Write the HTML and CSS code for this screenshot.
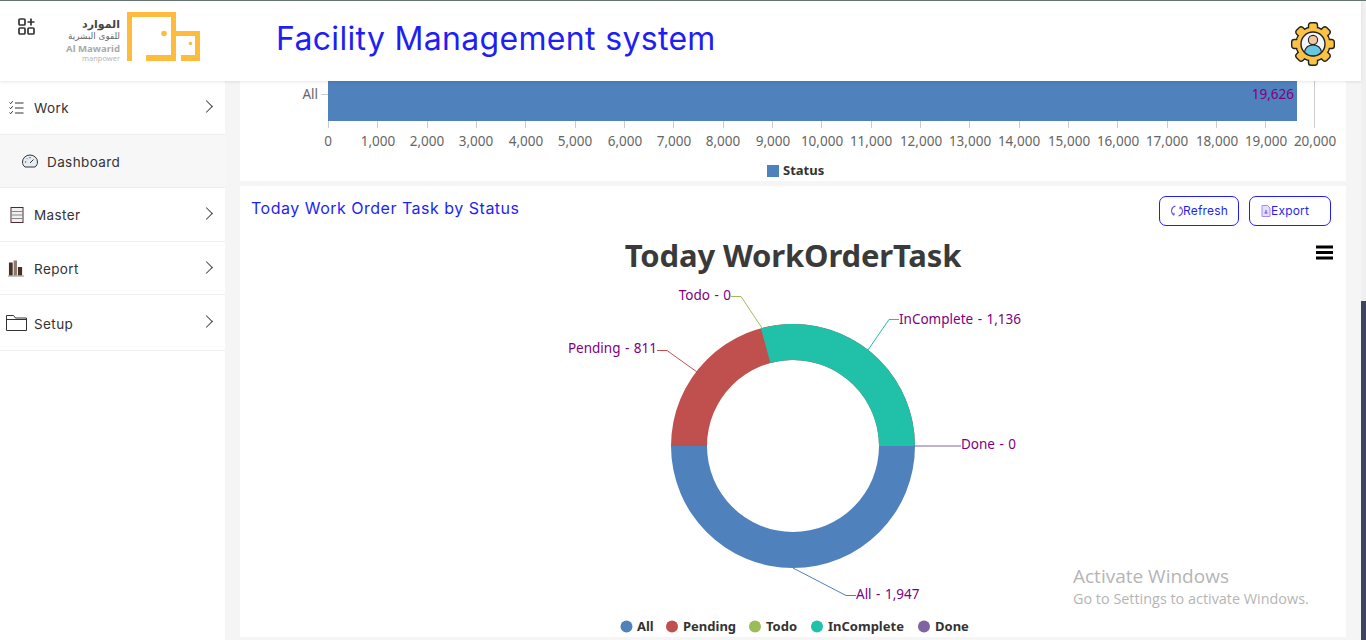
FILE: index.html
```html
<!DOCTYPE html>
<html lang="en">
<head>
    <meta charset="UTF-8">
    <title>Facility Management system</title>
    <link rel="stylesheet" href="styles.css">
</head>
<body>
    <div class="page">
        <header class="topbar">
            <div class="brand">
                <svg class="apps-icon" width="20" height="20" viewBox="0 0 20 20" fill="none" stroke="#333" stroke-width="1.7">
                    <rect x="2" y="2" width="6" height="6" rx="1"/>
                    <rect x="2" y="11" width="6" height="6" rx="1"/>
                    <rect x="11" y="11" width="6" height="6" rx="1"/>
                    <path d="M14 1.500v7M10.500 5h7"/>
                </svg>
                <div class="logo">
                    <div class="logo-text">
                        <span class="logo-ar-big">الموارد</span>
                        <span class="logo-ar">للقوى البشرية</span>
                        <span class="logo-en">Al Mawarid</span>
                        <span class="logo-sub">manpower</span>
                    </div>
                    <svg width="74" height="50" viewBox="0 0 74 50">
                        <path d="M0 0H49V49H19V43H44V5H5V49H0Z" fill="#fdbc3d"/>
                        <path d="M49 19H73V49H54V43H68V24H49Z" fill="#fdbc3d"/>
                        <circle cx="37" cy="21.500" r="2.800" fill="#fdbc3d"/>
                        <circle cx="63.500" cy="31.500" r="1.800" fill="#fdbc3d"/>
                    </svg>
                </div>
            </div>
            <h1 class="app-title">Facility Management system</h1>
            <svg class="user-gear" width="46" height="46" viewBox="0 0 46 46">
                <circle cx="23" cy="23" r="17" fill="#fcc244" stroke="#222" stroke-width="1.400"/>
                <g fill="#fcc244" stroke="#222" stroke-width="1.400">
                    <rect x="18.500" y="1.700" width="9" height="9" rx="2.500"/>
                    <rect x="18.500" y="1.700" width="9" height="9" rx="2.500" transform="rotate(45 23 23)"/>
                    <rect x="18.500" y="1.700" width="9" height="9" rx="2.500" transform="rotate(90 23 23)"/>
                    <rect x="18.500" y="1.700" width="9" height="9" rx="2.500" transform="rotate(135 23 23)"/>
                    <rect x="18.500" y="1.700" width="9" height="9" rx="2.500" transform="rotate(180 23 23)"/>
                    <rect x="18.500" y="1.700" width="9" height="9" rx="2.500" transform="rotate(225 23 23)"/>
                    <rect x="18.500" y="1.700" width="9" height="9" rx="2.500" transform="rotate(270 23 23)"/>
                    <rect x="18.500" y="1.700" width="9" height="9" rx="2.500" transform="rotate(315 23 23)"/>
                </g>
                <circle cx="23" cy="23" r="16.300" fill="#fcc244"/>
                <circle cx="23" cy="23" r="12" fill="#f1f4f8" stroke="#222" stroke-width="1.400"/>
                <circle cx="23" cy="19" r="4.600" fill="#f3c6a0" stroke="#222" stroke-width="1.100"/>
                <path d="M14.500 31c1-5 4.500-7 8.500-7s7.500 2 8.500 7c-2.300 2.500-5 3.800-8.500 3.800s-6.200-1.300-8.500-3.800z" fill="#69c6e0" stroke="#222" stroke-width="1.100"/>
            </svg>
        </header>

        <div class="layout">
            <nav class="sidebar">
                <a class="nav-item nav-work">
                    <svg class="nav-icon" width="16" height="16" viewBox="0 0 16 16" fill="none" stroke="#333" stroke-width="1">
                        <path d="M1.500 2.500l1.200 1.200 2-2.500M1.500 7.500l1.200 1.200 2-2.500M1.500 12.500l1.200 1.200 2-2.500M7 3h8.500M7 8h8.500M7 13h8.500"/>
                    </svg>
                    <span class="nav-label">Work</span>
                    <span class="chevron"></span>
                </a>
                <a class="nav-item nav-sub">
                    <svg class="nav-icon" width="16" height="16" viewBox="0 0 16 16" fill="none" stroke="#333" stroke-width="1">
                        <path d="M3 14C1.300 12.800.500 11 .500 9a7.500 7 0 0 1 15 0c0 2-.8 3.800-2.500 5z" fill="#e6edf5"/>
                        <path d="M8 10l3.500-3.500M3 9h1.200M5 5.500l.7.700M8 4v1.200"/>
                    </svg>
                    <span class="nav-label">Dashboard</span>
                </a>
                <a class="nav-item nav-master">
                    <svg class="nav-icon" width="16" height="16" viewBox="0 0 16 16" fill="none">
                        <rect x="3" y=".5" width="12" height="15" fill="#f0f0f0" stroke="#4a2a3a"/>
                        <path d="M3.500 4.500h11M3.500 8h11M3.500 11.500h11" stroke="#888"/>
                    </svg>
                    <span class="nav-label">Master</span>
                    <span class="chevron"></span>
                </a>
                <a class="nav-item nav-report">
                    <svg class="nav-icon" width="17" height="17" viewBox="0 0 17 17">
                        <path d="M1 2h4v14H1zM10.500 7H15v9h-4.500z" fill="#4a3020"/>
                        <path d="M6 0h3.500v16H6z" fill="#8a7a70"/>
                        <path d="M0 16.500h17" stroke="#888"/>
                    </svg>
                    <span class="nav-label">Report</span>
                    <span class="chevron"></span>
                </a>
                <a class="nav-item nav-setup">
                    <svg class="nav-folder" width="21" height="16" viewBox="0 0 21 16" fill="none" stroke="#333">
                        <path d="M.5 15.500V.5h7l2 2.500h11v12.500zM.5 4.500h20"/>
                    </svg>
                    <span class="nav-label">Setup</span>
                    <span class="chevron"></span>
                </a>
            </nav>

            <main class="content">
                <section class="card card-bar">
                    <svg width="1106" height="100" viewBox="240 81 1106 100">
                        <path d="M328.500 81V127M1314.500 81V127" stroke="#ccc"/>
                        <rect x="328" y="81" width="969" height="40" fill="#4f81bd"/>
                        <path d="M321 94.500h7" stroke="#ccc"/>
                        <text class="axis-label" x="318" y="99" text-anchor="end">All</text>
                        <text class="data-label" x="1294" y="99" text-anchor="end">19,626</text>
                        <path stroke="#ccc" d="M328.500 121v7M377.500 121v7M427.500 121v7M476.500 121v7M525.500 121v7M575.500 121v7M624.500 121v7M673.500 121v7M723.500 121v7M772.500 121v7M821.500 121v7M871.500 121v7M920.500 121v7M969.500 121v7M1019.500 121v7M1068.500 121v7M1117.500 121v7M1167.500 121v7M1216.500 121v7M1265.500 121v7M1314.500 121v7"/>
                        <g class="axis-label" text-anchor="middle">
                            <text x="328" y="146">0</text>
                            <text x="378" y="146">1,000</text>
                            <text x="427" y="146">2,000</text>
                            <text x="476" y="146">3,000</text>
                            <text x="526" y="146">4,000</text>
                            <text x="575" y="146">5,000</text>
                            <text x="625" y="146">6,000</text>
                            <text x="674" y="146">7,000</text>
                            <text x="723" y="146">8,000</text>
                            <text x="773" y="146">9,000</text>
                            <text x="822" y="146">10,000</text>
                            <text x="871" y="146">11,000</text>
                            <text x="921" y="146">12,000</text>
                            <text x="970" y="146">13,000</text>
                            <text x="1019" y="146">14,000</text>
                            <text x="1069" y="146">15,000</text>
                            <text x="1118" y="146">16,000</text>
                            <text x="1167" y="146">17,000</text>
                            <text x="1217" y="146">18,000</text>
                            <text x="1266" y="146">19,000</text>
                            <text x="1315" y="146">20,000</text>
                        </g>
                        <rect x="767" y="165" width="12" height="12" fill="#4f81bd"/>
                        <text class="legend-label" x="783" y="175">Status</text>
                    </svg>
                </section>

                <section class="card card-donut">
                    <div class="card-head">
                        <h2 class="card-title">Today Work Order Task by Status</h2>
                        <div class="card-actions">
                            <button class="btn btn-refresh">
                                <svg width="12" height="12" viewBox="0 0 12 12" fill="none" stroke="#6a50f5" stroke-width="1.100">
                                    <path d="M4.500 1A5 5 0 0 0 3 10.200M3 10.200V7.800M7.500 11A5 5 0 0 0 9 1.800M9 1.800v2.400"/>
                                </svg>Refresh
                            </button>
                            <button class="btn btn-export">
                                <svg width="10" height="12" viewBox="0 0 10 12" fill="#e6defc" stroke="#a48cf5">
                                    <path d="M1 .5h5.500L9 3v8.500H1z"/>
                                    <path d="M3.500 8h3M5 5v3" stroke="#5a45e0"/>
                                </svg>Export
                            </button>
                        </div>
                    </div>
                    <svg class="donut-chart" width="1106" height="413" viewBox="240 224 1106 413">
                        <text class="chart-title" x="793" y="267" text-anchor="middle">Today WorkOrderTask</text>
                        <path d="M1316 247h17M1316 252.500h17M1316 258h17" stroke="#000" stroke-width="3"/>

                        <!-- ring: centre 793,446, outer 122, inner 86 -->
                        <path d="M671 446A122 122 0 0 1 915 446H879A86 86 0 0 0 707 446Z" fill="#c0504d"/>
                        <path d="M760.900 328.300A122 122 0 0 1 915 446H879A86 86 0 0 0 770.400 363Z" fill="#21c0a9"/>
                        <path d="M671 446H707A86 86 0 0 0 879 446H915A122 122 0 0 1 671 446Z" fill="#4f81bd"/>

                        <g fill="none">
                            <path d="M914 446H961" stroke="#8064a2"/>
                            <path d="M868 350L889 319.500H899" stroke="#21c0a9"/>
                            <path d="M697 372L667 350.500H657" stroke="#c0504d"/>
                            <path d="M762 328L741 296.500H731" stroke="#9bbb59"/>
                            <path d="M793 568L846 595.500H856" stroke="#4f81bd"/>
                        </g>
                        <g class="data-label">
                            <text x="899" y="324">InComplete - 1,136</text>
                            <text x="961" y="449">Done - 0</text>
                            <text x="657" y="353" text-anchor="end">Pending - 811</text>
                            <text x="731" y="300" text-anchor="end">Todo - 0</text>
                            <text x="856" y="599">All - 1,947</text>
                        </g>

                        <g class="legend-label">
                            <circle cx="626.500" cy="626.500" r="6" fill="#4f81bd"/>
                            <text x="637" y="631">All</text>
                            <circle cx="672" cy="626.500" r="6" fill="#c0504d"/>
                            <text x="683" y="631">Pending</text>
                            <circle cx="755" cy="626.500" r="6" fill="#9bbb59"/>
                            <text x="766" y="631">Todo</text>
                            <circle cx="817" cy="626.500" r="6" fill="#21c0a9"/>
                            <text x="828" y="631">InComplete</text>
                            <circle cx="924" cy="626.500" r="6" fill="#8064a2"/>
                            <text x="935" y="631">Done</text>
                        </g>
                    </svg>
                    <div class="activate">
                        <div class="activate-title">Activate Windows</div>
                        <div>Go to Settings to activate Windows.</div>
                    </div>
                </section>
            </main>
        </div>
    </div>
    <div class="scroll-track"><div class="scroll-thumb"></div></div>
</body>
</html>
```

FILE: styles.css
```css
body {
    display: flex;
    margin: 0;
    height: 639px;
    overflow: hidden;
    background-color: #f5f5f5;
    border-top: 1px solid #66756e;
    font-family: "Inter", "Open Sans", sans-serif;
    color: #333;
}

.page {
    flex: 1;
    min-width: 0;
}

.topbar {
    position: relative;
    z-index: 2;
    display: flex;
    align-items: flex-start;
    height: 80px;
    background-color: #fff;
    box-shadow: 0 1px 3px rgba(0, 0, 0, 0.1);
}

.brand {
    display: flex;
    width: 276px;
    flex-shrink: 0;
}

.apps-icon {
    margin: 16px 0 0 17px;
}

.logo {
    display: flex;
    align-items: flex-start;
    margin: 11px 0 0 29px;
}

.logo-text {
    display: flex;
    flex-direction: column;
    align-items: flex-end;
    width: 54px;
    margin-right: 7px;
    padding-top: 7px;
    font-family: "Noto Sans", sans-serif;
    line-height: 1;
    white-space: nowrap;
}

.logo-ar-big {
    height: 13px;
    font-family: "DejaVu Sans", sans-serif;
    font-size: 11px;
    font-weight: 700;
    color: #444;
}

.logo-ar {
    height: 12px;
    font-family: "DejaVu Sans", sans-serif;
    font-size: 8.800px;
    color: #666;
}

.logo-en {
    height: 11px;
    font-size: 9.600px;
    font-weight: 700;
    color: #aaa;
}

.logo-sub {
    font-size: 7.500px;
    color: #b5b5b5;
}

.app-title {
    flex: 1;
    margin: 18px 0 0;
    font-size: 32px;
    font-weight: 400;
    line-height: 40px;
    letter-spacing: 0.32px;
    color: #1f1ff5;
}

.user-gear {
    margin: 20px 25px 0 0;
}

.layout {
    display: flex;
    height: 559px;
}

.sidebar {
    display: flex;
    flex-direction: column;
    width: 225px;
    flex-shrink: 0;
    background-color: #fff;
}

.nav-item {
    display: flex;
    align-items: center;
    padding: 0 12px 0 8px;
    font-size: 13.500px;
    letter-spacing: 0.4px;
    color: #333;
    border-bottom: 1px solid #eee;
}

.nav-work {
    height: 53px;
}

.nav-sub {
    height: 52px;
    padding-left: 22px;
    background-color: #f7f7f7;
}

.nav-master {
    height: 53px;
}

.nav-report {
    height: 52px;
}

.nav-setup {
    height: 55px;
    padding-left: 6px;
}

.nav-sub .nav-label, .nav-report .nav-label, .nav-setup .nav-label {
    margin-top: 2px;
}

.nav-icon {
    width: 16px;
    margin-right: 10px;
}

.nav-sub .nav-icon {
    margin-right: 9px;
}

.nav-folder {
    margin-right: 7px;
}

.nav-label {
    flex: 1;
}

.chevron {
    width: 8px;
    height: 8px;
    margin: -2px 2px 0 0;
    border-top: 1px solid #444;
    border-right: 1px solid #444;
    transform: rotate(45deg);
}

.content {
    display: flex;
    flex-direction: column;
    gap: 5px;
    flex: 1;
    padding: 0 15px;
    overflow: hidden;
}

.card {
    background-color: #fff;
}

.card-bar {
    height: 100px;
    flex-shrink: 0;
}

.card-bar svg, .donut-chart {
    display: block;
}

.card-donut {
    position: relative;
    height: 451px;
    flex-shrink: 0;
}

.card-head {
    display: flex;
    justify-content: space-between;
    height: 28px;
    padding: 10px 15px 0 11px;
}

.card-title {
    margin: 2px 0 0;
    font-size: 16px;
    font-weight: 400;
    letter-spacing: 0.5px;
    color: #1f1ff5;
}

.card-actions {
    display: flex;
    gap: 10px;
}

.btn {
    display: flex;
    align-items: center;
    height: 30px;
    padding: 0 0 1px 11px;
    font-family: "Inter", sans-serif;
    font-size: 12px;
    letter-spacing: 0.2px;
    color: #1f1ff5;
    background-color: #fff;
    border: 1px solid #1f1ff5;
    border-radius: 7px;
}

.btn-refresh {
    width: 80px;
}

.btn-export {
    width: 82px;
}

.chart-title {
    font-family: "Noto Sans", sans-serif;
    font-size: 31px;
    font-weight: 700;
    letter-spacing: -0.15px;
    fill: #3a3a3a;
}

.axis-label {
    font-family: "Noto Sans", sans-serif;
    font-size: 13.500px;
    fill: #666;
}

.data-label {
    font-family: "Noto Sans", sans-serif;
    font-size: 13.500px;
    word-spacing: 1px;
    fill: #800080;
}

.legend-label {
    font-family: "Noto Sans", sans-serif;
    font-size: 13px;
    font-weight: 700;
    fill: #333;
}

.activate {
    position: absolute;
    left: 833px;
    top: 377px;
    font-family: "Open Sans", sans-serif;
    font-size: 14.400px;
    color: #b5b5b5;
}

.activate-title {
    font-size: 19px;
}

.scroll-track {
    position: relative;
    width: 5px;
    flex-shrink: 0;
    background-color: #f0f0f0;
}

.scroll-thumb {
    position: absolute;
    top: 300px;
    bottom: 0;
    width: 100%;
    background-color: #3c4461;
}
```
